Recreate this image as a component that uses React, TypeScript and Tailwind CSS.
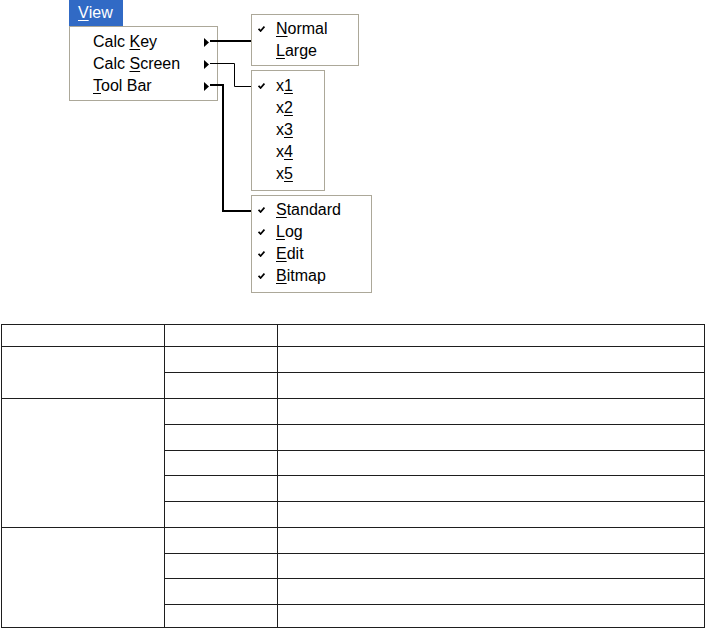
import React from "react";

type Item = { pre?: string; key: string; post?: string; checked?: boolean };

const font = { fontFamily: '"Liberation Sans", Arial, sans-serif' };

function Label({ item }: { item: Item }) {
  return (
    <span className="whitespace-nowrap">
      {item.pre}
      <span className="underline underline-offset-2 decoration-1">{item.key}</span>
      {item.post}
    </span>
  );
}

function Check() {
  return (
    <svg width="7" height="6" viewBox="0 0 7 6" className="ml-[6px] shrink-0">
      <path d="M0.6 2.8 L2.6 5 L6.4 0.6" fill="none" stroke="#000" strokeWidth="1.7" />
    </svg>
  );
}

function Arrow() {
  return (
    <svg width="5" height="9" viewBox="0 0 5 9" className="ml-auto mr-[8px] shrink-0">
      <polygon points="0,0 5,4.5 0,9" fill="#000" />
    </svg>
  );
}

function SubMenu({ items, className }: { items: Item[]; className: string }) {
  return (
    <div className={"border border-[#aca899] bg-white " + className}>
      {items.map((it, i) => (
        <div key={i} className="flex items-center h-[22px]">
          <div className="w-[24px] flex items-center">{it.checked && <Check />}</div>
          <Label item={it} />
        </div>
      ))}
    </div>
  );
}

const mainItems: Item[] = [
  { pre: "Calc ", key: "K", post: "ey" },
  { pre: "Calc ", key: "S", post: "creen" },
  { key: "T", post: "ool Bar" },
];

const sizeItems: Item[] = [
  { key: "N", post: "ormal", checked: true },
  { key: "L", post: "arge" },
];

const zoomItems: Item[] = [
  { pre: "x", key: "1", checked: true },
  { pre: "x", key: "2" },
  { pre: "x", key: "3" },
  { pre: "x", key: "4" },
  { pre: "x", key: "5" },
];

const barItems: Item[] = [
  { key: "S", post: "tandard", checked: true },
  { key: "L", post: "og", checked: true },
  { key: "E", post: "dit", checked: true },
  { key: "B", post: "itmap", checked: true },
];

const groups = [
  [26, 26],
  [26, 26, 25, 26, 26],
  [26, 25, 26, 23],
];

export default function App() {
  return (
    <div className="w-[706px] h-[628px] bg-white text-black overflow-hidden text-[16px]" style={font}>
      <div className="relative h-[324px]">
        <div className="flex">
          <div className="ml-[69px] w-[149px]">
            <div className="w-[54px] h-[26px] bg-[#316ac5] text-white flex items-center pl-[9px]">
              <span className="underline underline-offset-2 decoration-1">V</span>iew
            </div>
            <div className="border border-[#aca899] pt-[4px] pb-[3px]">
              {mainItems.map((it, i) => (
                <div key={i} className="flex items-center h-[22px] pl-[23px]">
                  <Label item={it} />
                  <Arrow />
                </div>
              ))}
            </div>
          </div>
          <div className="ml-[33px] pt-[14px] flex flex-col gap-[4px]">
            <SubMenu items={sizeItems} className="w-[108px] pt-[3px] pb-[3px]" />
            <SubMenu items={zoomItems} className="w-[74px] pt-[4px] pb-[5px]" />
            <SubMenu items={barItems} className="w-[121px] pt-[3px] pb-[5px]" />
          </div>
        </div>
        <svg className="absolute inset-0 pointer-events-none" width="706" height="324">
          <path d="M210 41 H251" stroke="#000" strokeWidth="2" fill="none" />
          <path d="M210 63.5 H234.5 V86.5 H251" stroke="#000" strokeWidth="1" fill="none" />
          <path d="M210 85 H223 V211 H251" stroke="#000" strokeWidth="2" fill="none" />
        </svg>
      </div>

      <div className="ml-[1px] w-[704px] border-l border-t border-[#1e1e1e] grid grid-cols-[163px_113px_1fr]">
        <div className="h-[22px] border-r border-b border-[#1e1e1e]" />
        <div className="h-[22px] border-r border-b border-[#1e1e1e]" />
        <div className="h-[22px] border-r border-b border-[#1e1e1e]" />
        {groups.map((rows, g) => (
          <React.Fragment key={g}>
            <div
              className="border-r border-b border-[#1e1e1e]"
              style={{ gridRow: `span ${rows.length}` }}
            />
            {rows.map((h, r) => (
              <React.Fragment key={r}>
                <div className="border-r border-b border-[#1e1e1e] col-start-2" style={{ height: h }} />
                <div className="border-r border-b border-[#1e1e1e]" style={{ height: h }} />
              </React.Fragment>
            ))}
          </React.Fragment>
        ))}
      </div>
    </div>
  );
}
